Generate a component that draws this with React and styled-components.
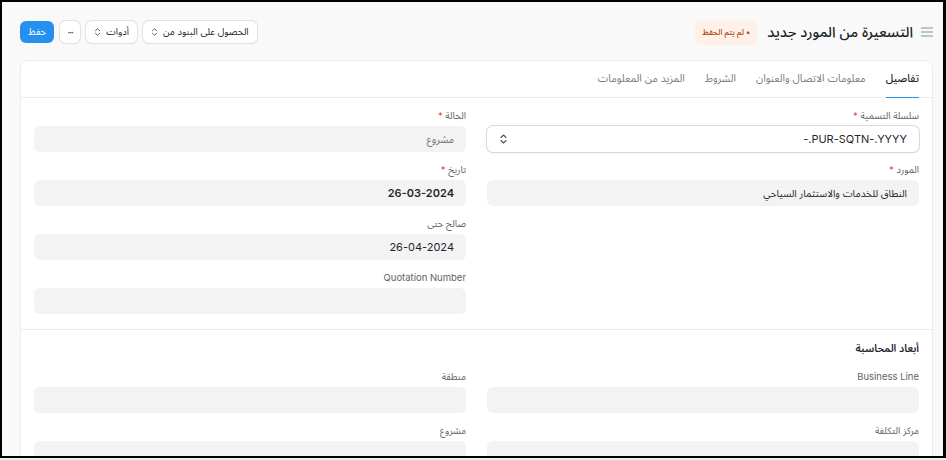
import React from 'react'
import styled, { createGlobalStyle } from 'styled-components'

const GlobalStyle = createGlobalStyle`
    html, body {
        margin: 0;
        padding: 0;
        background: #ececec;
    }
    body {
        font-family: Inter, "Noto Sans Arabic", "Noto Naskh Arabic", "DejaVu Sans", sans-serif;
        color: #1f272e;
    }
    * {
        box-sizing: border-box;
    }
`

const UpDown = ({ size = 9 }) => (
    <svg width={size} height={size + 3} viewBox="0 0 8 12" fill="none">
        <path d="M1.5 4.5L4 2L6.5 4.5" stroke="#525252" strokeWidth="1.1" strokeLinecap="round" strokeLinejoin="round" />
        <path d="M1.5 7.5L4 10L6.5 7.5" stroke="#525252" strokeWidth="1.1" strokeLinecap="round" strokeLinejoin="round" />
    </svg>
)

const Field = ({ label, required, value, strong, muted, select, small }) => (
    <FieldWrap>
        <Label>
            {label}
            {required && <Req> *</Req>}
        </Label>
        <Control $select={select} $strong={strong} $muted={muted} $small={small}>
            <span>{value}</span>
            {select && <UpDown />}
        </Control>
    </FieldWrap>
)

const App = () => {
    return (
        <>
            <GlobalStyle />
            <Frame dir="rtl">
                <Header>
                    <TitleGroup>
                        <Burger>
                            <svg width="12" height="10" viewBox="0 0 12 10">
                                <path d="M0 1h12M0 5h12M0 9h12" stroke="#8a8f94" strokeWidth="1.2" />
                            </svg>
                        </Burger>
                        <Title>التسعيرة من المورد جديد</Title>
                        <Badge>• لم يتم الحفظ</Badge>
                    </TitleGroup>
                    <Actions>
                        <Button>
                            الحصول على البنود من <UpDown size={7} />
                        </Button>
                        <Button>
                            أدوات <UpDown size={7} />
                        </Button>
                        <Button $icon>···</Button>
                        <Button $primary>حفظ</Button>
                    </Actions>
                </Header>

                <Card>
                    <Tabs>
                        <Tab $active>تفاصيل</Tab>
                        <Tab>معلومات الاتصال والعنوان</Tab>
                        <Tab>الشروط</Tab>
                        <Tab>المزيد من المعلومات</Tab>
                    </Tabs>

                    <Section>
                        <Grid>
                            <Column>
                                <Field label="سلسلة التسمية" required select value="PUR-SQTN-.YYYY.-" />
                                <Field label="المورد" required small value="النطاق للخدمات والاستثمار السياحي" />
                            </Column>
                            <Column>
                                <Field label="الحالة" required muted small value="مشروع" />
                                <Field label="تاريخ" required strong value="26-03-2024" />
                                <Field label="صالح حتى" value="26-04-2024" />
                                <Field label="Quotation Number" value="" />
                            </Column>
                        </Grid>
                    </Section>

                    <Section>
                        <SectionTitle>أبعاد المحاسبة</SectionTitle>
                        <Grid>
                            <Column>
                                <Field label="Business Line" value="" />
                                <Field label="مركز التكلفة" value="" />
                            </Column>
                            <Column>
                                <Field label="منطقة" value="" />
                                <Field label="مشروع" value="" />
                            </Column>
                        </Grid>
                    </Section>
                </Card>
            </Frame>
        </>
    )
}

export default App

const Frame = styled.div`
    width: 946px;
    height: 458px;
    border: 2px solid #000;
    border-right-width: 3px;
    background: #f9f9f9;
    overflow: hidden;
    padding: 0 10px 0 18px;
`

const Header = styled.div`
    display: flex;
    justify-content: space-between;
    align-items: center;
    height: 58px;
    padding-top: 2px;
`

const TitleGroup = styled.div`
    display: flex;
    align-items: center;
    gap: 8px;
`

const Burger = styled.span`
    display: flex;
    align-items: center;
`

const Title = styled.h1`
    margin: 0;
    font-size: 14.5px;
    font-weight: 500;
    color: #1a1f24;
`

const Badge = styled.span`
    background: #fff1e7;
    color: #a8470f;
    font-size: 8px;
    font-weight: 500;
    border-radius: 5px;
    padding: 4px 7px;
    margin-right: 2px;
`

const Actions = styled.div`
    display: flex;
    align-items: center;
    gap: 6px;
`

const Button = styled.button`
    display: flex;
    align-items: center;
    justify-content: center;
    gap: 5px;
    height: 22px;
    padding: 0 ${p => (p.$icon ? '5px' : '8px')};
    border: none;
    border-radius: 6px;
    font-family: inherit;
    font-size: 9.5px;
    color: ${p => (p.$primary ? '#fff' : '#1f272e')};
    background: ${p => (p.$primary ? '#2490ef' : '#fff')};
    box-shadow: ${p => (p.$primary ? 'none' : '0 0 0 1px #e2e2e2, 0 1px 2px rgba(0,0,0,0.06)')};
    letter-spacing: ${p => (p.$icon ? '-1px' : 'normal')};
    min-width: ${p => (p.$icon ? '20px' : p.$primary ? '32px' : '0')};
`

const Card = styled.div`
    background: #fff;
    border: 1px solid #ededed;
    border-radius: 8px;
    height: 420px;
`

const Tabs = styled.div`
    display: flex;
    gap: 20px;
    padding: 0 13px;
    height: 37px;
    border-bottom: 1px solid #eeeeee;
`

const Tab = styled.div`
    display: flex;
    align-items: center;
    font-size: 10.5px;
    font-weight: ${p => (p.$active ? 500 : 400)};
    color: ${p => (p.$active ? '#1f272e' : '#7c7c7c')};
    border-bottom: 1px solid ${p => (p.$active ? '#2490ef' : 'transparent')};
    margin-bottom: -1px;
`

const Section = styled.div`
    padding: 10px 13px 5px;
    & + & {
        border-top: 1px solid #eeeeee;
        padding-top: 11px;
    }
`

const SectionTitle = styled.h3`
    margin: 0 0 12px;
    font-size: 10.5px;
    font-weight: 600;
    line-height: 16px;
    color: #1f272e;
`

const Grid = styled.div`
    display: grid;
    grid-template-columns: 1fr 1fr;
    column-gap: 21px;
`

const Column = styled.div`
    display: flex;
    flex-direction: column;
`

const FieldWrap = styled.div`
    margin-bottom: 10px;
`

const Label = styled.div`
    font-size: 9.5px;
    line-height: 16px;
    color: #5e6368;
    margin-bottom: 2px;
`

const Req = styled.span`
    color: #e24c4c;
`

const Control = styled.div`
    display: flex;
    align-items: center;
    justify-content: space-between;
    height: 26px;
    padding: 0 12px;
    border-radius: 6px;
    font-size: ${p => (p.$small ? '10px' : '11px')};
    font-weight: ${p => (p.$strong ? 600 : 400)};
    color: ${p => (p.$muted ? '#6b7075' : '#1f272e')};
    background: ${p => (p.$select ? '#fff' : '#f3f3f3')};
    box-shadow: ${p => (p.$select ? '0 0 0 1px #d8d8d8, 0 1px 2px rgba(0,0,0,0.08)' : 'none')};
`
